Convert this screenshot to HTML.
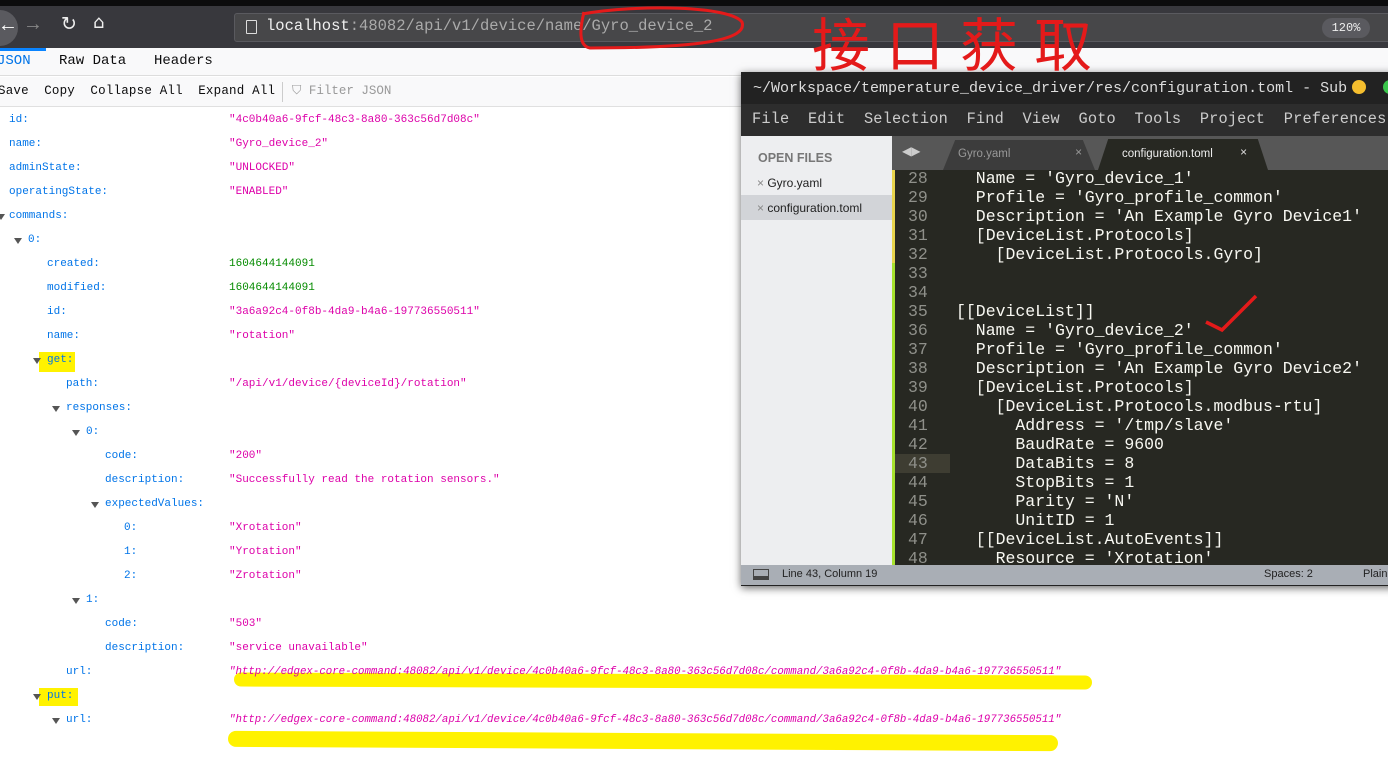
<!DOCTYPE html><html><head><meta charset="utf-8"><style>
*{margin:0;padding:0;box-sizing:border-box}
body{width:1388px;height:759px;overflow:hidden;background:#fff;position:relative;font-family:"Liberation Mono",monospace}
.a{position:absolute;white-space:pre}
.k{color:#0074e8;font-size:11px}
.v{color:#dd00a9;font-size:11px}
.n{color:#058b00;font-size:11px}
.tw{position:absolute;width:0;height:0;border-left:4px solid transparent;border-right:4px solid transparent;border-top:6px solid #555}
.c{color:#f8f8f2;font-size:16.5px}
.ln{color:#8f908a;font-size:16.5px}
</style></head><body>
<div class="a" style="left:0;top:0;width:1388px;height:48px;background:#38383d"></div>
<div class="a" style="left:0;top:0;width:1388px;height:6px;background:#0c0c0d"></div>
<div class="a" style="left:-18px;top:10px;width:36px;height:36px;border-radius:50%;background:#5a5a5f;color:#fff;font-size:20px;line-height:34px;text-align:right;padding-right:4px">←</div>
<div class="a" style="left:27px;top:14px;color:#888;font-size:20px">→</div>
<div class="a" style="left:61px;top:13px;color:#eee;font-size:19px;font-family:'DejaVu Sans'">↻</div>
<div class="a" style="left:93px;top:12px;color:#eee;font-size:18px;font-family:'DejaVu Sans'">⌂</div>
<div class="a" style="left:234px;top:13px;width:1160px;height:29px;border:1px solid #5a5a5f;border-radius:3px;background:#474749"></div>
<div class="a" style="left:246px;top:20px;width:11px;height:14px;border:1.5px solid #ddd;border-radius:1px"></div>
<div class="a" style="left:266px;top:17px;font-size:15.5px;color:#f0f0f0">localhost<span style="color:#aaa">:48082/api/v1/device/name/Gyro_device_2</span></div>
<div class="a" style="left:1322px;top:18px;width:48px;height:20px;border-radius:10px;background:#5a5a5f;color:#eee;font-size:12px;text-align:center;line-height:20px">120%</div>
<div class="a" style="left:0;top:48px;width:1388px;height:28px;background:#f9f9fa;border-bottom:1px solid #ddd"></div>
<div class="a" style="left:0;top:48px;width:46px;height:3px;background:#0a84ff"></div>
<div class="a" style="left:-3px;top:53px;font-size:14px;color:#0074e8">JSON</div>
<div class="a" style="left:59px;top:53px;font-size:14px;color:#0c0c0d">Raw Data</div>
<div class="a" style="left:154px;top:53px;font-size:14px;color:#0c0c0d">Headers</div>
<div class="a" style="left:0;top:77px;width:1388px;height:30px;background:#f9f9fa;border-bottom:1px solid #e0e0e0"></div>
<div class="a" style="left:-2px;top:84px;font-size:12.5px;color:#0c0c0d;letter-spacing:0.2px">Save  Copy  Collapse All  Expand All</div>
<div class="a" style="left:282px;top:82px;width:1px;height:20px;background:#ccc"></div>
<div class="a" style="left:292px;top:84px;font-size:12.5px;color:#999">⛉ Filter JSON</div>
<div class="a k" style="left:9px;top:114px">id:</div><div class="a v" style="left:229px;top:114px">"4c0b40a6-9fcf-48c3-8a80-363c56d7d08c"</div>
<div class="a k" style="left:9px;top:138px">name:</div><div class="a v" style="left:229px;top:138px">"Gyro_device_2"</div>
<div class="a k" style="left:9px;top:162px">adminState:</div><div class="a v" style="left:229px;top:162px">"UNLOCKED"</div>
<div class="a k" style="left:9px;top:186px">operatingState:</div><div class="a v" style="left:229px;top:186px">"ENABLED"</div>
<div class="tw" style="left:-3px;top:214px"></div><div class="a k" style="left:9px;top:210px">commands:</div>
<div class="tw" style="left:14px;top:238px"></div><div class="a k" style="left:28px;top:234px">0:</div>
<div class="a k" style="left:47px;top:258px">created:</div><div class="a n" style="left:229px;top:258px">1604644144091</div>
<div class="a k" style="left:47px;top:282px">modified:</div><div class="a n" style="left:229px;top:282px">1604644144091</div>
<div class="a k" style="left:47px;top:306px">id:</div><div class="a v" style="left:229px;top:306px">"3a6a92c4-0f8b-4da9-b4a6-197736550511"</div>
<div class="a k" style="left:47px;top:330px">name:</div><div class="a v" style="left:229px;top:330px">"rotation"</div>
<div class="a" style="left:39px;top:352px;width:36px;height:20px;background:#fff200"></div>
<div class="tw" style="left:33px;top:358px"></div><div class="a k" style="left:47px;top:354px">get:</div>
<div class="a k" style="left:66px;top:378px">path:</div><div class="a v" style="left:229px;top:378px">"/api/v1/device/{deviceId}/rotation"</div>
<div class="tw" style="left:52px;top:406px"></div><div class="a k" style="left:66px;top:402px">responses:</div>
<div class="tw" style="left:72px;top:430px"></div><div class="a k" style="left:86px;top:426px">0:</div>
<div class="a k" style="left:105px;top:450px">code:</div><div class="a v" style="left:229px;top:450px">"200"</div>
<div class="a k" style="left:105px;top:474px">description:</div><div class="a v" style="left:229px;top:474px">"Successfully read the rotation sensors."</div>
<div class="tw" style="left:91px;top:502px"></div><div class="a k" style="left:105px;top:498px">expectedValues:</div>
<div class="a k" style="left:124px;top:522px">0:</div><div class="a v" style="left:229px;top:522px">"Xrotation"</div>
<div class="a k" style="left:124px;top:546px">1:</div><div class="a v" style="left:229px;top:546px">"Yrotation"</div>
<div class="a k" style="left:124px;top:570px">2:</div><div class="a v" style="left:229px;top:570px">"Zrotation"</div>
<div class="tw" style="left:72px;top:598px"></div><div class="a k" style="left:86px;top:594px">1:</div>
<div class="a k" style="left:105px;top:618px">code:</div><div class="a v" style="left:229px;top:618px">"503"</div>
<div class="a k" style="left:105px;top:642px">description:</div><div class="a v" style="left:229px;top:642px">"service unavailable"</div>
<div class="a k" style="left:66px;top:666px">url:</div>
<div class="a" style="left:234px;top:674px;width:858px;height:14px;background:#fff200;border-radius:7px;transform:rotate(0.2deg)"></div>
<div class="a v" style="left:229px;top:666px;font-style:italic;font-size:10.75px">"http://edgex-core-command:48082/api/v1/device/4c0b40a6-9fcf-48c3-8a80-363c56d7d08c/command/3a6a92c4-0f8b-4da9-b4a6-197736550511"</div>
<div class="a" style="left:39px;top:688px;width:39px;height:18px;background:#fff200"></div>
<div class="tw" style="left:33px;top:694px"></div><div class="a k" style="left:47px;top:690px">put:</div>
<div class="tw" style="left:52px;top:718px"></div><div class="a k" style="left:66px;top:714px">url:</div>
<div class="a v" style="left:229px;top:714px;font-style:italic;font-size:10.75px">"http://edgex-core-command:48082/api/v1/device/4c0b40a6-9fcf-48c3-8a80-363c56d7d08c/command/3a6a92c4-0f8b-4da9-b4a6-197736550511"</div>
<div class="a" style="left:228px;top:733px;width:830px;height:16px;background:#fff200;border-radius:8px;transform:rotate(0.3deg)"></div>
<div class="a" style="left:741px;top:72px;width:660px;height:514px;background:#222;box-shadow:0 2px 8px rgba(0,0,0,.6)"></div>
<div class="a" style="left:753px;top:80px;font-size:15px;color:#ddd">~/Workspace/temperature_device_driver/res/configuration.toml - Sub</div>
<div class="a" style="left:1352px;top:80px;width:14px;height:14px;border-radius:50%;background:#f5be2e"></div>
<div class="a" style="left:1383px;top:80px;width:14px;height:14px;border-radius:50%;background:#3ac64b"></div>
<div class="a" style="left:741px;top:104px;width:660px;height:32px;background:#2d2d2d"></div>
<div class="a" style="left:752px;top:110px;font-size:15.3px;color:#ccc;letter-spacing:0.15px">File  Edit  Selection  Find  View  Goto  Tools  Project  Preferences</div>
<div class="a" style="left:741px;top:136px;width:151px;height:429px;background:#edeef0"></div>
<div class="a" style="left:758px;top:151px;font-family:'Liberation Sans';font-size:12.5px;font-weight:bold;color:#777">OPEN FILES</div>
<div class="a" style="left:757px;top:176px;font-family:'Liberation Sans';font-size:12px;color:#222"><span style="color:#888">× </span>Gyro.yaml</div>
<div class="a" style="left:741px;top:195px;width:151px;height:25px;background:#d2d4d8"></div>
<div class="a" style="left:757px;top:201px;font-family:'Liberation Sans';font-size:12px;color:#222"><span style="color:#888">× </span>configuration.toml</div>
<div class="a" style="left:892px;top:136px;width:500px;height:34px;background:#575757"></div>
<div class="a" style="left:902px;top:144px;font-size:12px;color:#ccc">◀▶</div>
<div class="a" style="left:943px;top:140px;width:152px;height:30px;background:#3c3c3c;clip-path:polygon(8% 0,92% 0,100% 100%,0 100%)"></div>
<div class="a" style="left:958px;top:148px;font-family:'Liberation Sans';font-size:11.5px;color:#999">Gyro.yaml</div>
<div class="a" style="left:1075px;top:146px;font-size:12px;color:#999">×</div>
<div class="a" style="left:1098px;top:139px;width:170px;height:31px;background:#272822;clip-path:polygon(6% 0,94% 0,100% 100%,0 100%)"></div>
<div class="a" style="left:1122px;top:148px;font-family:'Liberation Sans';font-size:11.5px;color:#eee">configuration.toml</div>
<div class="a" style="left:1240px;top:146px;font-size:12px;color:#ddd">×</div>
<div class="a" style="left:892px;top:170px;width:500px;height:395px;background:#272822"></div>
<div class="a" style="left:892px;top:170px;width:3px;height:93px;background:#e8d44d"></div>
<div class="a" style="left:892px;top:263px;width:3px;height:302px;background:#a6e22e"></div>
<div class="a" style="left:895px;top:454px;width:55px;height:19px;background:#3e3d32"></div>
<div class="a ln" style="left:908px;top:169px;line-height:19px">28
29
30
31
32
33
34
35
36
37
38
39
40
41
42
43
44
45
46
47
48</div>
<div class="a c" style="left:956px;top:169px;line-height:19px;height:395px;overflow:hidden">  Name = 'Gyro_device_1'
  Profile = 'Gyro_profile_common'
  Description = 'An Example Gyro Device1'
  [DeviceList.Protocols]
    [DeviceList.Protocols.Gyro]


[[DeviceList]]
  Name = 'Gyro_device_2'
  Profile = 'Gyro_profile_common'
  Description = 'An Example Gyro Device2'
  [DeviceList.Protocols]
    [DeviceList.Protocols.modbus-rtu]
      Address = '/tmp/slave'
      BaudRate = 9600
      DataBits = 8
      StopBits = 1
      Parity = 'N'
      UnitID = 1
  [[DeviceList.AutoEvents]]
    Resource = 'Xrotation'</div>
<div class="a" style="left:741px;top:565px;width:660px;height:20px;background:#a9aeb5"></div>
<div class="a" style="left:753px;top:569px;width:16px;height:11px;border:1px solid #444;border-bottom-width:4px"></div>
<div class="a" style="left:782px;top:568px;font-family:'Liberation Sans';font-size:11px;color:#222">Line 43, Column 19</div>
<div class="a" style="left:1264px;top:568px;font-family:'Liberation Sans';font-size:11px;color:#222">Spaces: 2</div>
<div class="a" style="left:1363px;top:568px;font-family:'Liberation Sans';font-size:11px;color:#222">Plain</div>
<svg class="a" style="left:0;top:0" width="1388" height="759">
<path d="M582 14 C640 4 730 6 742 22 C748 40 700 48 590 48 C578 46 580 28 584 12" fill="none" stroke="#e41a1a" stroke-width="3"/>
<path d="M1206 322 L1222 330 L1256 296" fill="none" stroke="#e41a1a" stroke-width="3.5"/>
<text x="812" y="66" font-family="Noto Sans CJK SC" font-size="58" fill="#e41a1a" letter-spacing="16">接口获取</text>
</svg>
</body></html>
